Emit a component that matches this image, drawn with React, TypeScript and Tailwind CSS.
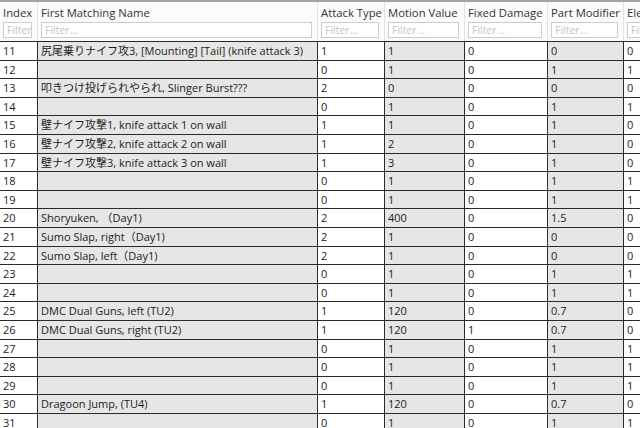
type Row = [number, string, string, string, string, string, string];

const rows: Row[] = [
  [11, '尻尾乗りナイフ攻3, [Mounting] [Tail] (knife attack 3)', '1', '1', '0', '0', '0'],
  [12, '', '0', '1', '0', '1', '1'],
  [13, '叩きつけ投げられやられ, Slinger Burst???', '2', '0', '0', '0', '0'],
  [14, '', '0', '1', '0', '1', '1'],
  [15, '壁ナイフ攻撃1, knife attack 1 on wall', '1', '1', '0', '1', '0'],
  [16, '壁ナイフ攻撃2, knife attack 2 on wall', '1', '2', '0', '1', '0'],
  [17, '壁ナイフ攻撃3, knife attack 3 on wall', '1', '3', '0', '1', '0'],
  [18, '', '0', '1', '0', '1', '1'],
  [19, '', '0', '1', '0', '1', '1'],
  [20, 'Shoryuken, （Day1)', '2', '400', '0', '1.5', '0'],
  [21, 'Sumo Slap, right（Day1)', '2', '1', '0', '0', '0'],
  [22, 'Sumo Slap, left（Day1)', '2', '1', '0', '0', '0'],
  [23, '', '0', '1', '0', '1', '1'],
  [24, '', '0', '1', '0', '1', '1'],
  [25, 'DMC Dual Guns, left (TU2)', '1', '120', '0', '0.7', '0'],
  [26, 'DMC Dual Guns, right (TU2)', '1', '120', '1', '0.7', '0'],
  [27, '', '0', '1', '0', '1', '1'],
  [28, '', '0', '1', '0', '1', '1'],
  [29, '', '0', '1', '0', '1', '1'],
  [30, 'Dragoon Jump, (TU4)', '1', '120', '0', '0.7', '0'],
  [31, '', '0', '1', '0', '1', '1'],
];

const headers = ['Index', 'First Matching Name', 'Attack Type', 'Motion Value', 'Fixed Damage', 'Part Modifier', 'Element'];

// grey columns: name, motion value, part modifier
const shaded = [false, true, false, true, false, true, false];

const cols = 'grid grid-cols-[37px_280px_67px_80px_83px_76px_40px]';

export default function App() {
  return (
    <div
      className="h-[428px] w-[640px] overflow-hidden bg-white text-[11px] text-[#1c1c1c]"
      style={{ fontFamily: '"Open Sans", "Noto Sans CJK JP", sans-serif' }}
    >
      <div className="border-t-2 border-[#a3a3a3]">
        <div className={`${cols} h-[39px] bg-[#fbfbfb]`}>
          {headers.map((h, i) => (
            <div
              key={h}
              className={`flex min-w-0 flex-col overflow-hidden ${i > 0 ? 'border-l border-[#e2e2e2]' : ''}`}
            >
              <div className="whitespace-nowrap pl-[3px] pt-[2px] text-[11.3px] leading-[17px] text-[#333]">{h}</div>
              <div className="ml-[3px] mr-[5px] mt-[1px] h-[16px] overflow-hidden whitespace-nowrap border border-[#cdcdcd] bg-white pl-[3px] text-[10.5px] leading-[14px] text-[#c4c4c4]">
                Filter...
              </div>
            </div>
          ))}
        </div>
        <div className="border-t border-[#2a2a2a]">
          {rows.map((r) => (
            <div key={r[0]} className={`${cols} h-[18.6px] border-b border-[#2a2a2a]`}>
              {r.map((v, i) => (
                <div
                  key={i}
                  className={`overflow-hidden whitespace-nowrap pl-[3px] leading-[17px] ${i > 0 ? 'border-l border-[#2a2a2a]' : ''} ${shaded[i] ? 'bg-[#e6e6e6]' : 'bg-white'}`}
                >
                  {v}
                </div>
              ))}
            </div>
          ))}
        </div>
      </div>
    </div>
  );
}
